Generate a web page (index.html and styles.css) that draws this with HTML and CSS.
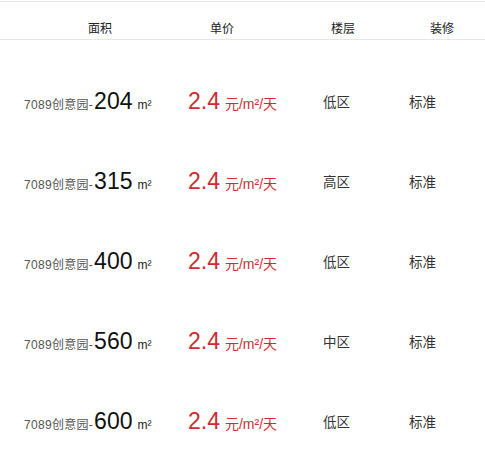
FILE: index.html
```html
<!DOCTYPE html>
<html lang="zh">
<head>
<meta charset="utf-8">
<link rel="stylesheet" href="styles.css">
</head>
<body>
<div class="table">
  <div class="head">
    <div class="h h1">面积</div>
    <div class="h h2">单价</div>
    <div class="h h3">楼层</div>
    <div class="h h4">装修</div>
  </div>
  <div class="rows">
    <div class="row">
      <div class="area"><span class="name">7089创意园-</span><span class="big num">204</span><span class="unit">m²</span></div>
      <div class="price"><span class="big">2.4</span><span class="punit">元/m²/天</span></div>
      <div class="floor">低区</div>
      <div class="deco">标准</div>
    </div>
    <div class="row">
      <div class="area"><span class="name">7089创意园-</span><span class="big num">315</span><span class="unit">m²</span></div>
      <div class="price"><span class="big">2.4</span><span class="punit">元/m²/天</span></div>
      <div class="floor">高区</div>
      <div class="deco">标准</div>
    </div>
    <div class="row">
      <div class="area"><span class="name">7089创意园-</span><span class="big num">400</span><span class="unit">m²</span></div>
      <div class="price"><span class="big">2.4</span><span class="punit">元/m²/天</span></div>
      <div class="floor">低区</div>
      <div class="deco">标准</div>
    </div>
    <div class="row">
      <div class="area"><span class="name">7089创意园-</span><span class="big num">560</span><span class="unit">m²</span></div>
      <div class="price"><span class="big">2.4</span><span class="punit">元/m²/天</span></div>
      <div class="floor">中区</div>
      <div class="deco">标准</div>
    </div>
    <div class="row">
      <div class="area"><span class="name">7089创意园-</span><span class="big num">600</span><span class="unit">m²</span></div>
      <div class="price"><span class="big">2.4</span><span class="punit">元/m²/天</span></div>
      <div class="floor">低区</div>
      <div class="deco">标准</div>
    </div>
  </div>
</div>
</body>
</html>
```
FILE: styles.css
```css
html, body {
  margin: 0;
  padding: 0;
  background: #fff;
}
body {
  font-family: "Liberation Sans", Arial, "Noto Sans CJK SC", sans-serif;
  color: #333;
}
.table {
  margin-top: 1px;
  border-top: 1px solid #e6e6e6;
}
.head {
  display: grid;
  grid-template-columns: 122px 121px 99px 1fr;
  padding-left: 88px;
  height: 38px;
  align-items: end;
  box-sizing: border-box;
  border-bottom: 1px solid #e6e6e6;
}
.h {
  font-size: 12px;
  line-height: 14px;
  color: #222;
  padding-bottom: 3px;
}
.rows {
  padding-top: 21px;
}
.row {
  display: grid;
  grid-template-columns: 164px 135px 86px 1fr;
  padding-left: 24px;
  height: 80px;
  align-items: center;
}
.area, .price {
  display: flex;
  align-items: baseline;
}
.name {
  font-size: 12px;
  letter-spacing: 0.3px;
  color: #555;
}
.big {
  font-size: 23px;
  line-height: 26px;
}
.num {
  color: #111;
  margin-left: 1px;
}
.unit {
  font-size: 12px;
  color: #222;
  margin-left: 5px;
}
.price {
  color: #d42a2f;
}
.punit {
  font-size: 14px;
  margin-left: 5px;
}
.floor, .deco {
  font-size: 13.5px;
  color: #333;
}
```
